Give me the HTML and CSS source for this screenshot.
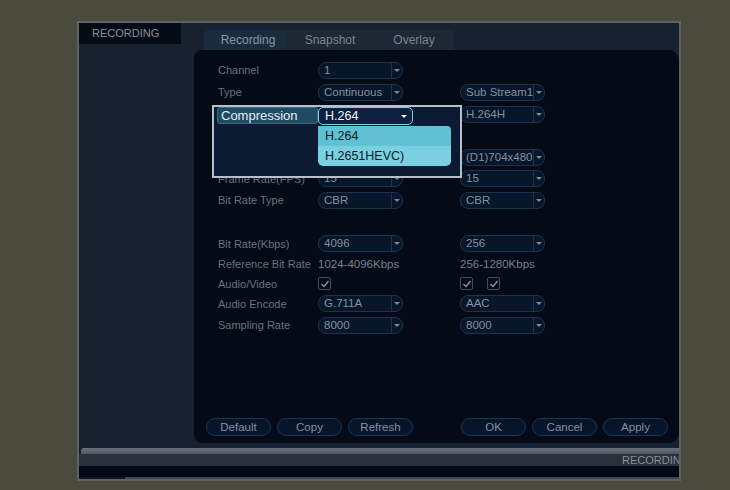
FILE: index.html
```html
<html lang="en">

<head>
    <title>Recording Settings</title>
    <link rel="stylesheet" href="styles.css">
</head>

<body>
    <div class="window">
        <div class="content">
            <div class="sidebar">
                <div class="side-title">RECORDING</div>
            </div>
            <div class="main">
                <div class="tabs">
                    <div class="tab active">Recording</div>
                    <div class="tab snap">Snapshot</div>
                    <div class="tab">Overlay</div>
                </div>
                <div class="panel">
                    <div class="form">
                        <div class="label">Channel</div>
                        <div class="cell"><div class="select"><span class="val">1</span><span class="arrow"></span></div></div>
                        <div class="cell"></div>

                        <div class="label">Type</div>
                        <div class="cell"><div class="select"><span class="val">Continuous</span><span class="arrow"></span></div></div>
                        <div class="cell"><div class="select"><span class="val">Sub Stream1</span><span class="arrow"></span></div></div>

                        <!-- left cells of the next rows sit under the open dropdown -->
                        <div class="label"></div>
                        <div class="cell"></div>
                        <div class="cell"><div class="select"><span class="val">H.264H</span><span class="arrow"></span></div></div>

                        <div class="label"></div>
                        <div class="cell"></div>
                        <div class="cell"></div>

                        <div class="label"></div>
                        <div class="cell"></div>
                        <div class="cell"><div class="select"><span class="val">(D1)704x480</span><span class="arrow"></span></div></div>

                        <div class="label">Frame Rate(FPS)</div>
                        <div class="cell"><div class="select"><span class="val">15</span><span class="arrow"></span></div></div>
                        <div class="cell"><div class="select"><span class="val">15</span><span class="arrow"></span></div></div>

                        <div class="label">Bit Rate Type</div>
                        <div class="cell"><div class="select"><span class="val">CBR</span><span class="arrow"></span></div></div>
                        <div class="cell"><div class="select"><span class="val">CBR</span><span class="arrow"></span></div></div>

                        <div class="label"></div>
                        <div class="cell"></div>
                        <div class="cell"></div>

                        <div class="label">Bit Rate(Kbps)</div>
                        <div class="cell"><div class="select"><span class="val">4096</span><span class="arrow"></span></div></div>
                        <div class="cell"><div class="select"><span class="val">256</span><span class="arrow"></span></div></div>

                        <div class="label">Reference Bit Rate</div>
                        <div class="cell text">1024-4096Kbps</div>
                        <div class="cell text">256-1280Kbps</div>

                        <div class="label">Audio/Video</div>
                        <div class="cell">
                            <span class="check"><svg width="10" height="10" viewBox="0 0 10 10"><path d="M1.5 5 L4 7.5 L8.5 2" fill="none" stroke="#8d99a6" stroke-width="1.3"/></svg></span>
                        </div>
                        <div class="cell checks">
                            <span class="check"><svg width="10" height="10" viewBox="0 0 10 10"><path d="M1.5 5 L4 7.5 L8.5 2" fill="none" stroke="#8d99a6" stroke-width="1.3"/></svg></span>
                            <span class="check"><svg width="10" height="10" viewBox="0 0 10 10"><path d="M1.5 5 L4 7.5 L8.5 2" fill="none" stroke="#8d99a6" stroke-width="1.3"/></svg></span>
                        </div>

                        <div class="label">Audio Encode</div>
                        <div class="cell"><div class="select"><span class="val">G.711A</span><span class="arrow"></span></div></div>
                        <div class="cell"><div class="select"><span class="val">AAC</span><span class="arrow"></span></div></div>

                        <div class="label">Sampling Rate</div>
                        <div class="cell"><div class="select"><span class="val">8000</span><span class="arrow"></span></div></div>
                        <div class="cell"><div class="select"><span class="val">8000</span><span class="arrow"></span></div></div>
                    </div>

                    <div class="buttons">
                        <div class="btn">Default</div>
                        <div class="btn">Copy</div>
                        <div class="btn">Refresh</div>
                        <div class="btn first-right">OK</div>
                        <div class="btn">Cancel</div>
                        <div class="btn">Apply</div>
                    </div>

                    <!-- open compression dropdown -->
                    <div class="popup">
                        <div class="pop-label">Compression</div>
                        <div class="combo">
                            <div class="pop-select"><span>H.264</span><span class="pop-arrow"></span></div>
                            <div class="options">
                                <div class="option">H.264</div>
                                <div class="option light">H.2651HEVC)</div>
                            </div>
                        </div>
                    </div>
                </div>
            </div>
        </div>
        <div class="status">
            <div class="stripe"></div>
            <div class="band">RECORDING</div>
            <div class="dark"></div>
            <div class="line"></div>
        </div>
    </div>
</body>
</html>
```

FILE: styles.css
```css
body {
    margin: 0;
    padding: 0;
    width: 730px;
    height: 490px;
    background-color: #4b4b3d;
    overflow: hidden;
    font-family: "Liberation Sans", Arial, sans-serif;
}

.window {
    margin: 21px 0 0 77px;
    width: 604px;
    height: 460px;
    box-sizing: border-box;
    border: 2px solid #5d6168;
    background-color: #182130;
    display: flex;
    flex-direction: column;
}

.content {
    flex: 1;
    display: flex;
}

.sidebar {
    width: 115px;
}

.side-title {
    width: 102px;
    height: 21px;
    box-sizing: border-box;
    padding-left: 13px;
    background-color: #050b15;
    color: #8a9099;
    font-size: 11px;
    line-height: 21px;
}

.main {
    flex: 1;
    display: flex;
    flex-direction: column;
    padding-top: 7px;
    padding-bottom: 5px;
}

.tabs {
    display: flex;
    height: 20px;
    margin-left: 10px;
}

.tab {
    width: 80px;
    text-align: center;
    line-height: 20px;
    font-size: 12px;
    color: #7b848f;
    background-color: #1e2734;
    background-image: radial-gradient(#263140 0.6px, transparent 0.7px);
    background-size: 2px 2px;
}

.tab.snap {
    width: 88px;
}

.tab.active {
    width: 82px;
    box-sizing: border-box;
    padding-left: 6px;
    color: #8c96a1;
    background: #1b2b3d;
    border-radius: 5px 4px 0 0;
}

.panel {
    position: relative;
    flex: 1;
    display: flex;
    flex-direction: column;
    background-color: #040b16;
    border-radius: 8px 10px 10px 8px;
}

.form {
    display: grid;
    grid-template-columns: 100px 142px 100px;
    grid-template-rows: 22px 22px 22px 21px 22px 21px 22px 22px 21px 20px 19px 21px 22px;
    align-items: center;
    padding: 9px 0 0 24px;
}

.label {
    font-size: 11px;
    color: #68727f;
    white-space: nowrap;
}

.cell.text {
    font-size: 11.5px;
    color: #76818e;
}

.cell.checks {
    display: flex;
    gap: 14px;
}

.select {
    width: 85px;
    height: 17px;
    box-sizing: border-box;
    display: flex;
    border: 1px solid #1b3251;
    border-radius: 8px;
    background-color: #08162a;
    color: #8290a0;
    font-size: 11.5px;
    line-height: 15px;
}

.select .val {
    flex: 1;
    padding-left: 5px;
    white-space: nowrap;
    overflow: hidden;
}

.select .arrow {
    width: 10px;
    border-left: 1px solid #1b3251;
    display: flex;
    align-items: center;
    justify-content: center;
}

.select .arrow::after {
    content: "";
    border-left: 3px solid transparent;
    border-right: 3px solid transparent;
    border-top: 3px solid #7d8896;
}

.check {
    width: 13px;
    height: 13px;
    box-sizing: border-box;
    border: 1px solid #3e4f63;
    border-radius: 2px;
    display: inline-flex;
    align-items: center;
    justify-content: center;
}

.buttons {
    margin-top: auto;
    display: flex;
    gap: 6px;
    padding: 0 0 7px 12px;
}

.btn {
    width: 65px;
    height: 18px;
    box-sizing: border-box;
    border: 1px solid #1a3555;
    border-radius: 9px;
    background-color: #07152a;
    color: #8490a0;
    font-size: 11.5px;
    line-height: 16px;
    text-align: center;
}

.btn.first-right {
    margin-left: 42px;
}

.popup {
    position: absolute;
    left: 18px;
    top: 55px;
    width: 250px;
    height: 73px;
    box-sizing: border-box;
    border: 2px solid #b6c0c8;
    background-color: #0c1b31;
    display: flex;
    padding-left: 3px;
}

.pop-label {
    width: 101px;
    height: 17px;
    box-sizing: border-box;
    border: 1px solid #3b6c84;
    border-radius: 3px;
    background-color: #1e4a62;
    color: #e6eef2;
    font-size: 13px;
    line-height: 15px;
    padding-left: 3px;
}

.combo {
    display: flex;
    flex-direction: column;
}

.pop-select {
    width: 95px;
    height: 18px;
    box-sizing: border-box;
    border: 1px solid #86cadc;
    border-radius: 5px;
    background-color: #0c2140;
    color: #f2f6f8;
    font-size: 12.5px;
    line-height: 16px;
    padding-left: 6px;
    display: flex;
    justify-content: space-between;
    align-items: center;
}

.pop-arrow {
    margin-right: 5px;
    border-left: 3px solid transparent;
    border-right: 3px solid transparent;
    border-top: 3px solid #eef2f5;
}

.options {
    margin-top: 1px;
    width: 133px;
    border-radius: 0 4px 5px 5px;
    overflow: hidden;
}

.option {
    height: 20px;
    line-height: 20px;
    padding-left: 7px;
    font-size: 12.5px;
    color: #0b1a27;
    background-color: #60c1d4;
}

.option.light {
    background-color: #7ad0e0;
}

.status {
    display: flex;
    flex-direction: column;
}

.stripe {
    height: 6px;
    margin-left: 2px;
    border-radius: 3px 0 0 0;
    background: linear-gradient(#6e737b, #50565f);
}

.band {
    height: 12px;
    padding-left: 543px;
    background-color: #2a313d;
    color: #8a8f96;
    font-size: 11px;
    line-height: 12px;
    white-space: nowrap;
    overflow: hidden;
}

.dark {
    height: 11px;
    background-color: #030914;
}

.line {
    height: 2px;
    background: linear-gradient(to right, #101826 46px, #3d4553 46px);
}
```
